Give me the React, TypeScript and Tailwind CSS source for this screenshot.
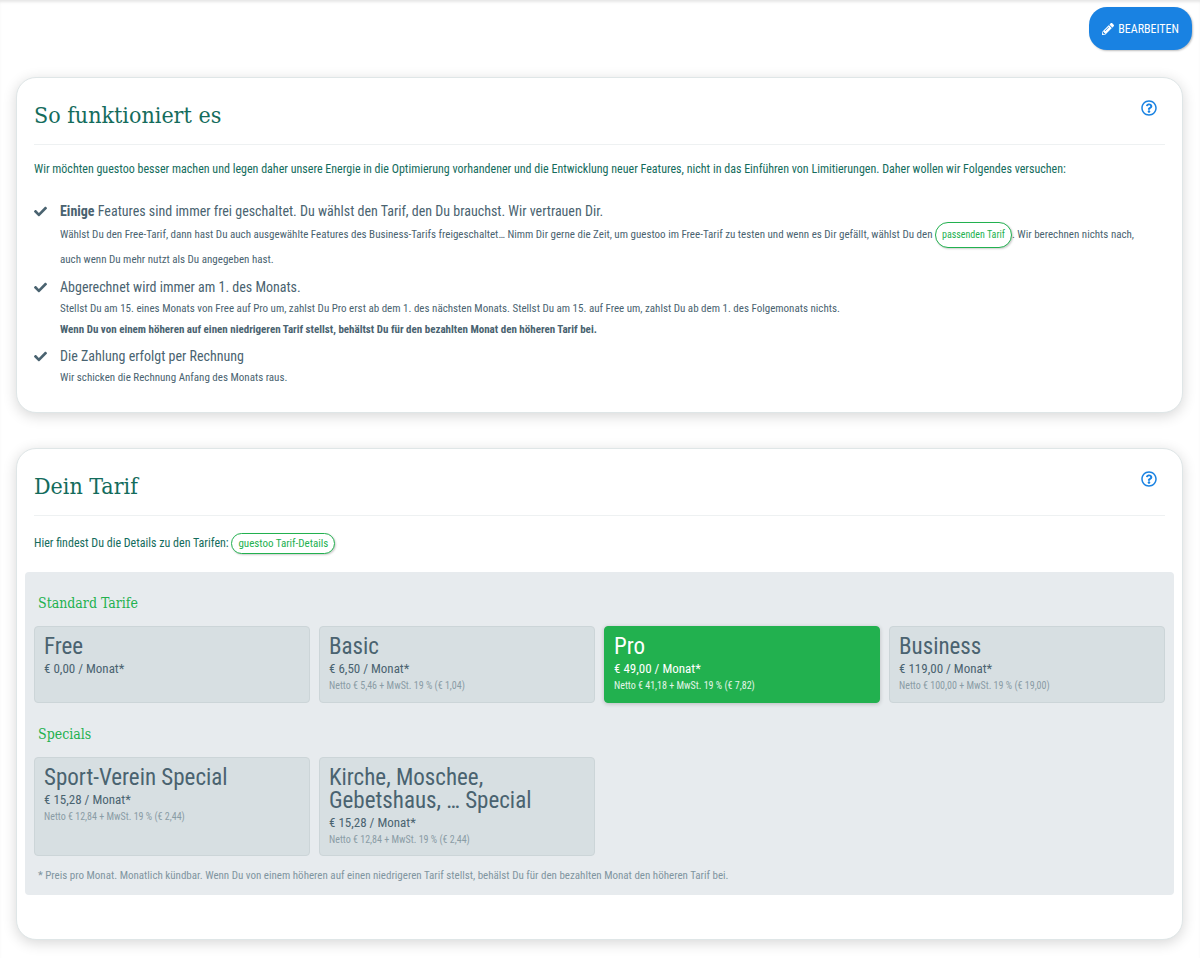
import type { ReactNode } from "react";
import clsx from "clsx";
import { FaCheck, FaPencilAlt, FaRegQuestionCircle } from "react-icons/fa";

const STANDARD_PLANS = [
  { id: "free", name: "Free", price: "€ 0,00 / Monat*", net: "" },
  { id: "basic", name: "Basic", price: "€ 6,50 / Monat*", net: "Netto € 5,46 + MwSt. 19 % (€ 1,04)" },
  { id: "pro", name: "Pro", price: "€ 49,00 / Monat*", net: "Netto € 41,18 + MwSt. 19 % (€ 7,82)" },
  { id: "business", name: "Business", price: "€ 119,00 / Monat*", net: "Netto € 100,00 + MwSt. 19 % (€ 19,00)" },
];

const SPECIAL_PLANS = [
  { id: "sport", name: "Sport-Verein Special", price: "€ 15,28 / Monat*", net: "Netto € 12,84 + MwSt. 19 % (€ 2,44)" },
  { id: "kirche", name: "Kirche, Moschee, Gebetshaus, … Special", price: "€ 15,28 / Monat*", net: "Netto € 12,84 + MwSt. 19 % (€ 2,44)" },
];

const CURRENT_PLAN = "pro";

type Plan = (typeof STANDARD_PLANS)[number];

function Card({ title, className, children }: { title: string; className?: string; children: ReactNode }) {
  return (
    <section
      className={clsx(
        "rounded-[20px] border border-[#dfe6e7] bg-white px-[17px] shadow-[0_3px_14px_rgba(0,0,0,0.16)]",
        className
      )}
    >
      <header className="flex h-[67px] items-start justify-between border-b border-[#eef1f2]">
        <h2 className="pt-[21px] font-['Roboto_Slab','DejaVu_Serif_Condensed','DejaVu_Serif',serif] text-[23px] leading-8 text-[#146c5c]">
          {title}
        </h2>
        <button type="button" aria-label="Hilfe" className="mt-[22px] mr-2 text-[#1982e2]">
          <FaRegQuestionCircle className="size-4" />
        </button>
      </header>
      {children}
    </section>
  );
}

function PillLink({ className, children }: { className?: string; children: ReactNode }) {
  return (
    <a
      href="#tarife"
      className={clsx(
        "inline-block rounded-full border border-[#22b14f] bg-white px-1.5 text-[#22b14f] shadow-[1px_1px_2px_rgba(0,0,0,0.2)]",
        className
      )}
    >
      {children}
    </a>
  );
}

function Step({ title, children }: { title: ReactNode; children: ReactNode }) {
  return (
    <li className="flex gap-[13px]">
      <FaCheck className="mt-1 size-[13px] shrink-0" />
      <div>
        <h3 className="text-[14px] leading-[21px]">{title}</h3>
        {children}
      </div>
    </li>
  );
}

function PlanTile({ plan }: { plan: Plan }) {
  const active = plan.id === CURRENT_PLAN;
  return (
    <button
      type="button"
      aria-pressed={active}
      className={clsx(
        "flex min-h-[77px] flex-col items-start rounded border px-[9px] py-2 text-left",
        active
          ? "border-[#22b14f] bg-[#22b14f] text-white shadow-[0_1px_4px_rgba(0,0,0,0.2)]"
          : "border-[#ccd5d8] bg-[#d7dfe2]"
      )}
    >
      <span className="text-[23px] leading-[23px]">{plan.name}</span>
      <span className="text-[13px] leading-[21px]">{plan.price}</span>
      {plan.net && (
        <span className={clsx("text-[10px] leading-[14px]", active ? "text-[#e3f5e9]" : "text-[#8a9ca5]")}>
          {plan.net}
        </span>
      )}
    </button>
  );
}

function PlanGroup({ title, plans }: { title: string; plans: Plan[] }) {
  return (
    <div>
      <h3 className="px-1 pt-[21px] pb-[13px] font-['Roboto_Slab','DejaVu_Serif_Condensed','DejaVu_Serif',serif] text-[14px] leading-5 text-[#22b14f]">
        {title}
      </h3>
      <div className="grid grid-cols-4 gap-[9px]">
        {plans.map((plan) => (
          <PlanTile key={plan.id} plan={plan} />
        ))}
      </div>
    </div>
  );
}

export default function App() {
  return (
    <div className="min-h-screen bg-white pb-[19px] font-['Roboto_Condensed','Liberation_Sans_Narrow',sans-serif] text-[#4a6370] shadow-[inset_0_3px_3px_-1px_rgba(0,0,0,0.1)]">
      <div className="flex justify-end px-2 pt-[7px]">
        <button
          type="button"
          className="flex h-[43px] items-center gap-1 rounded-[18px] bg-[#1982e2] px-[13px] text-[12px] text-white shadow-[1px_1px_2px_rgba(0,0,0,0.25)]"
        >
          <FaPencilAlt className="size-3" />
          BEARBEITEN
        </button>
      </div>

      <main className="flex flex-col gap-[35px] pt-[27px] pr-[17px] pl-4">
        <Card title="So funktioniert es" className="pb-6">
          <p className="mt-[14px] text-[12px] leading-5 text-[#146c5c]">
            Wir möchten guestoo besser machen und legen daher unsere Energie in die Optimierung vorhandener und die
            Entwicklung neuer Features, nicht in das Einführen von Limitierungen. Daher wollen wir Folgendes versuchen:
          </p>
          <ul className="mt-[22px] flex flex-col gap-1.5 pr-4">
            <Step
              title={
                <>
                  <strong>Einige</strong> Features sind immer frei geschaltet. Du wählst den Tarif, den Du brauchst.
                  Wir vertrauen Dir.
                </>
              }
            >
              <p className="text-[11px] leading-[23px]">
                Wählst Du den Free-Tarif, dann hast Du auch ausgewählte Features des Business-Tarifs freigeschaltet…
                Nimm Dir gerne die Zeit, um guestoo im Free-Tarif zu testen und wenn es Dir gefällt, wählst Du den{" "}
                <PillLink className="text-[10px] leading-6">passenden Tarif</PillLink>. Wir berechnen nichts nach, auch
                wenn Du mehr nutzt als Du angegeben hast.
              </p>
            </Step>
            <Step title="Abgerechnet wird immer am 1. des Monats.">
              <p className="text-[11px] leading-[21px]">
                Stellst Du am 15. eines Monats von Free auf Pro um, zahlst Du Pro erst ab dem 1. des nächsten Monats.
                Stellst Du am 15. auf Free um, zahlst Du ab dem 1. des Folgemonats nichts.
              </p>
              <p className="text-[11px] leading-[21px] font-bold">
                Wenn Du von einem höheren auf einen niedrigeren Tarif stellst, behältst Du für den bezahlten Monat den
                höheren Tarif bei.
              </p>
            </Step>
            <Step title="Die Zahlung erfolgt per Rechnung">
              <p className="text-[11px] leading-[21px]">Wir schicken die Rechnung Anfang des Monats raus.</p>
            </Step>
          </ul>
        </Card>

        <Card title="Dein Tarif" className="pb-11">
          <p className="mt-[15px] text-[12px] leading-6 text-[#146c5c]">
            Hier findest Du die Details zu den Tarifen:{" "}
            <PillLink className="text-[11px] leading-[19px]">guestoo Tarif-Details</PillLink>
          </p>
          <div className="-mx-[9px] mt-[17px] rounded bg-[#e7ebee] px-[9px] pb-[9px]">
            <PlanGroup title="Standard Tarife" plans={STANDARD_PLANS} />
            <PlanGroup title="Specials" plans={SPECIAL_PLANS} />
            <p className="px-1 pt-[10px] text-[11px] leading-5 text-[#8095a0]">
              * Preis pro Monat. Monatlich kündbar. Wenn Du von einem höheren auf einen niedrigeren Tarif stellst,
              behälst Du für den bezahlten Monat den höheren Tarif bei.
            </p>
          </div>
        </Card>
      </main>
    </div>
  );
}
